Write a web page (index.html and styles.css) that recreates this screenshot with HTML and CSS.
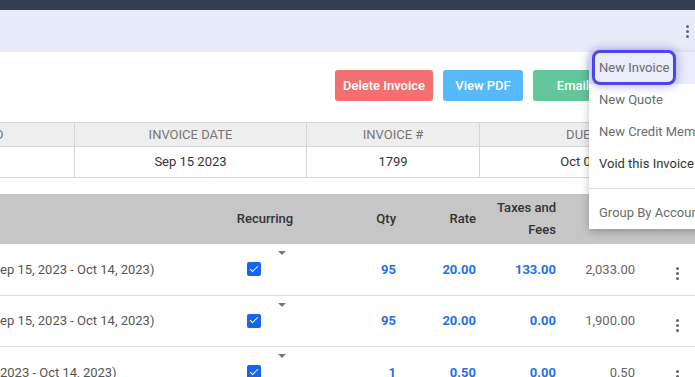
FILE: index.html
```html
<!DOCTYPE html>
<html lang="en">
<head>
  <meta charset="UTF-8">
  <meta name="viewport" content="width=device-width, initial-scale=1.0">
  <title>Invoice</title>
  <link rel="stylesheet" href="styles.css">
</head>
<body>
  <div class="topBar"></div>
  <div class="toolBar">
    <span class="kebab"><i></i><i></i><i></i></span>
  </div>

  <div class="page">
    <div class="actions">
      <button class="btn btnRed">Delete Invoice</button>
      <button class="btn btnBlue">View PDF</button>
      <button class="btn btnGreen">Email</button>
    </div>

    <div class="infoTable">
      <div class="infoHead">Customer ID</div>
      <div class="infoHead">Invoice Date</div>
      <div class="infoHead">Invoice #</div>
      <div class="infoHead">Due Date</div>
      <div class="infoCell">10482</div>
      <div class="infoCell">Sep 15 2023</div>
      <div class="infoCell">1799</div>
      <div class="infoCell">Oct 05 2023</div>
    </div>

    <div class="items">
      <div class="itemsHead">
        <div></div>
        <div class="center">Recurring</div>
        <div class="num">Qty</div>
        <div class="num">Rate</div>
        <div class="num">Taxes and<br>Fees</div>
        <div class="num"></div>
        <div></div>
      </div>

      <div class="itemRow">
        <div class="desc">ep 15, 2023 - Oct 14, 2023)</div>
        <div class="recur"><span class="check"></span><span class="caret"></span></div>
        <div class="num link">95</div>
        <div class="num link">20.00</div>
        <div class="num link">133.00</div>
        <div class="num amount">2,033.00</div>
        <div class="more"><span class="kebab"><i></i><i></i><i></i></span></div>
      </div>

      <div class="itemRow">
        <div class="desc">ep 15, 2023 - Oct 14, 2023)</div>
        <div class="recur"><span class="check"></span><span class="caret"></span></div>
        <div class="num link">95</div>
        <div class="num link">20.00</div>
        <div class="num link">0.00</div>
        <div class="num amount">1,900.00</div>
        <div class="more"><span class="kebab"><i></i><i></i><i></i></span></div>
      </div>

      <div class="itemRow">
        <div class="desc">2023 - Oct 14, 2023)</div>
        <div class="recur"><span class="check"></span><span class="caret"></span></div>
        <div class="num link">1</div>
        <div class="num link">0.50</div>
        <div class="num link">0.00</div>
        <div class="num amount">0.50</div>
        <div class="more"><span class="kebab"><i></i><i></i><i></i></span></div>
      </div>
    </div>
  </div>

  <ul class="menu">
    <li class="menuItem focused"><span class="ring">New Invoice</span></li>
    <li class="menuItem">New Quote</li>
    <li class="menuItem">New Credit Memo</li>
    <li class="menuItem dark">Void this Invoice</li>
    <li class="menuDivider"></li>
    <li class="menuItem">Group By Account</li>
  </ul>
</body>
</html>
```

FILE: styles.css
```css
body{margin: 0; font-family: Roboto, "Liberation Sans", sans-serif; font-size: 13px; color: #333; background: #fff; overflow: hidden; width: 695px; height: 377px; position: relative;}

.topBar{height: 10px; background: #363f51;}
.toolBar{height: 42px; background: #e8ebfa; display: flex; align-items: center; justify-content: flex-end; padding-right: 6px;}

.kebab{display: inline-flex; flex-direction: column; gap: 2px;}
.kebab i{width: 3px; height: 3px; border-radius: 50%; background: #666; display: block;}

.page{padding-top: 18px;}

.actions{display: flex; justify-content: flex-end; gap: 10px; padding-right: 82px;}
.btn{font-family: inherit; font-size: 13px; font-weight: 500; color: #fff; border: 0; border-radius: 3px; height: 31px; min-width: 80px; padding: 0 8px; text-align: center;}
.btnRed{background: #f46f6f;}
.btnBlue{background: #56b9f9;}
.btnGreen{background: #62c69c;}

.infoTable{display: grid; grid-template-columns: 225px 232px 173px 232px; margin: 21px 0 0 -150px; border-top: 1px solid #d6d6d6; width: max-content;}
.infoHead, .infoCell{text-align: center; border-right: 1px solid #d6d6d6; border-bottom: 1px solid #d6d6d6;}
.infoHead{background: #eee; color: #757575; text-transform: uppercase; height: 23px; line-height: 23px;}
.infoCell{height: 30px; line-height: 30px; color: #333;}

.items{margin-top: 16px; width: 720px;}
.itemsHead, .itemRow{display: grid; grid-template-columns: 230px 70px 100px 80px 80px 80px 80px; align-items: center;}
.itemsHead{background: #c6c6c6; height: 50px; font-weight: 500; color: #333; line-height: 22px;}
.center{text-align: center;}
.num{text-align: right; padding-right: 4px;}

.itemRow{height: 50.5px; border-bottom: 1px solid #ddd;}
.desc{color: #555; white-space: nowrap;}
.recur{display: flex; justify-content: center; gap: 17px; padding-left: 3px;}
.check{width: 14px; height: 14px; border-radius: 2px; background: #1565f0; position: relative;}
.check:after{content: ""; position: absolute; left: 4.5px; top: 1.5px; width: 3px; height: 7px; border: solid #fff; border-width: 0 1.5px 1.5px 0; transform: rotate(45deg);}
.caret{width: 0; height: 0; border-left: 4px solid transparent; border-right: 4px solid transparent; border-top: 4px solid #777; margin-top: -11px;}
.link{color: #2470e6; font-weight: 700;}
.amount{color: #666; padding-right: 5px;}
.more{text-align: center; padding-right: 6px;}

.menu{position: absolute; left: 589px; top: 52px; width: 130px; margin: 0; padding: 0; list-style: none; background: #fff; box-shadow: 0 3px 8px rgba(0,0,0,0.25);}
.menuItem{height: 32px; line-height: 32px; padding-left: 10px; color: #6b6b6b; white-space: nowrap;}
.menuItem.dark{color: #333;}
.menuItem.focused{background: #eaecfb; padding-left: 3px; position: relative;}
.ring{display: inline-block; height: 29px; line-height: 29px; margin-top: -2px; padding: 0 4px; border: 3px solid #4f46e5; border-radius: 8px; box-shadow: 0 0 8px 2px rgba(79,70,229,0.35); background: #eaecfb; vertical-align: top;}
.menuDivider{height: 1px; background: #ddd; margin: 8px 0;}
```
